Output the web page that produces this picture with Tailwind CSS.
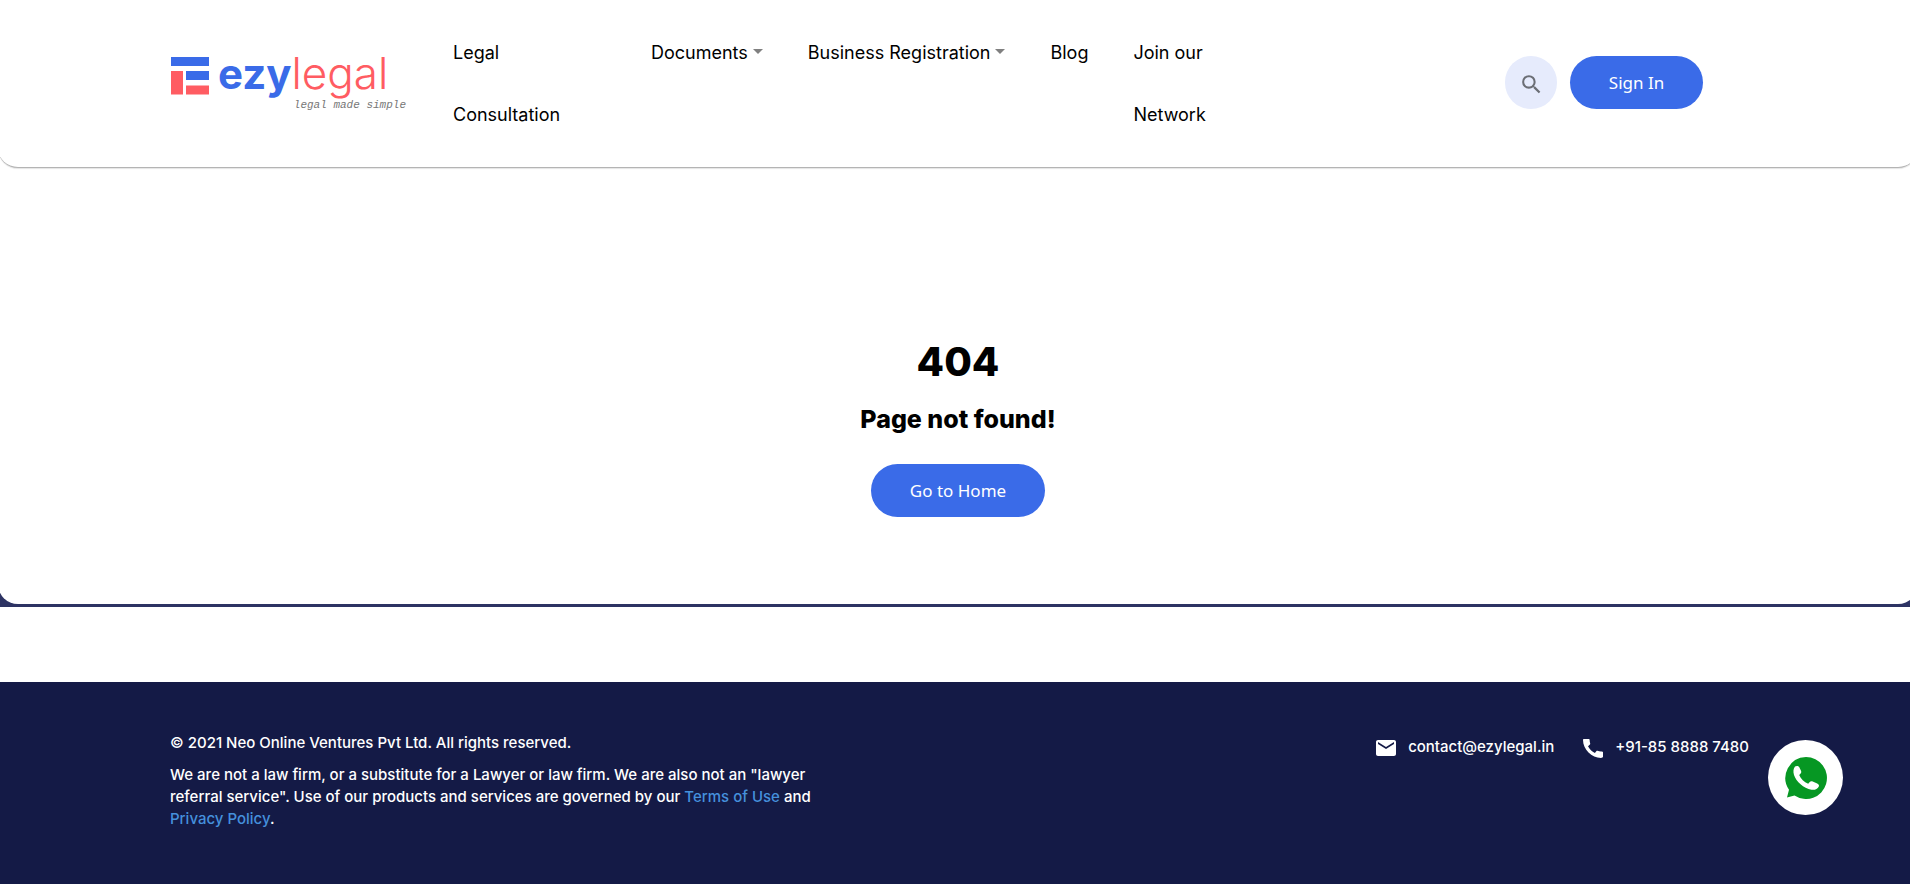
<!DOCTYPE html>
<html lang="en">
<head>
<meta charset="utf-8">
<meta name="viewport" content="width=device-width, initial-scale=1">
<title>ezylegal</title>
<script src="https://cdn.jsdelivr.net/npm/@tailwindcss/browser@4"></script>
</head>
<body class="bg-white font-['Inter',sans-serif] text-black overflow-x-hidden">
<div class="overflow-hidden bg-[#2d3363] pb-[3px]">
  <div class="-ml-[2px] -mr-[8px] rounded-b-[20px] bg-white">
    <header class="flex items-start rounded-b-[20px] border-b border-[#b4b4b4] bg-white pt-[22px] pb-[21px] pl-[173px] pr-[215px] shadow-[0_1px_1px_#e5e5e5]">
      <a href="#" class="mt-[27px] flex w-[235px] shrink-0 gap-2" aria-label="ezylegal home">
        <svg class="mt-[7px] h-[39px] w-[39px] shrink-0" viewBox="0 0 39 39" aria-hidden="true">
          <path fill="#3a6be8" d="M0 1h38v9H0zM15 15h23v9H15z"/>
          <path fill="#ff5c62" d="M0 15h12v23.500H0zM15 29.500h23v9H15z"/>
        </svg>
        <span class="flex grow flex-col">
          <span class="flex h-12 items-baseline whitespace-nowrap leading-[48px]"><span class="text-[42px] font-bold text-[#3a6be8]">ezy</span><span class="text-[44px] font-light text-[#ff5c62]">legal</span></span>
          <span class="self-end whitespace-nowrap font-['Liberation_Mono',monospace] text-[11px] leading-4 text-[#777] italic">legal made simple</span>
        </span>
      </a>
      <nav class="ml-[47px] flex gap-[45px] text-[18px] leading-[62px] whitespace-nowrap">
        <a href="#" class="w-[153px]">Legal<br>Consultation</a>
        <a href="#" class="flex h-[62px] items-center gap-[5px]">Documents
          <svg class="mb-1 h-[5px] w-[10px]" viewBox="0 0 10 5" fill="#808080" aria-hidden="true"><path d="M0 0h10L5 5z"/></svg></a>
        <a href="#" class="flex h-[62px] items-center gap-[5px]">Business Registration
          <svg class="mb-1 h-[5px] w-[10px]" viewBox="0 0 10 5" fill="#808080" aria-hidden="true"><path d="M0 0h10L5 5z"/></svg></a>
        <a href="#">Blog</a>
        <a href="#">Join our<br>Network</a>
      </nav>
      <div class="mt-[34px] ml-auto flex gap-[13px]">
        <button type="button" aria-label="Search" class="flex h-[53px] w-[52px] items-center justify-center rounded-full bg-[#e6ebfc]">
          <svg class="mt-1 h-[25px] w-[25px]" viewBox="0 0 24 24" fill="#6b6e75" aria-hidden="true"><path d="M15.500 14h-.79l-.28-.27A6.471 6.471 0 0 0 16 9.500 6.500 6.500 0 1 0 9.500 16c1.610 0 3.090-.59 4.230-1.570l.27.28v.79l5 4.990L20.490 19l-4.990-5zm-6 0C7.010 14 5 11.990 5 9.500S7.010 5 9.500 5 14 7.010 14 9.500 11.990 14 9.500 14z"/></svg>
        </button>
        <button type="button" class="h-[53px] w-[133px] rounded-full bg-[#3a6be8] pt-px font-['Noto_Sans',sans-serif] text-[17px] text-white">Sign In</button>
      </div>
    </header>
    <main class="flex flex-col items-center pt-[170px] pb-[87px]">
      <h1 class="text-[40px] leading-[48px] font-extrabold">404</h1>
      <h2 class="mt-[17px] text-[25px] leading-8 font-extrabold">Page not found!</h2>
      <button type="button" class="mt-[29px] h-[53px] w-[174px] rounded-full bg-[#3a6be8] font-['Noto_Sans',sans-serif] text-[17px] text-white">Go to Home</button>
    </main>
  </div>
</div>
<footer class="mt-[75px] flex min-h-[202px] justify-between bg-[#141a46] pt-[50px] pr-[161px] pb-[54px] pl-[170px] text-[15px] leading-[22px] font-medium text-white">
  <div class="w-[650px]">
    <p>© 2021 Neo Online Ventures Pvt Ltd. All rights reserved.</p>
    <p class="mt-[10px]">We are not a law firm, or a substitute for a Lawyer or law firm. We are also not an "lawyer referral service". Use of our products and services are governed by our <a href="#" class="text-[#4590dc]">Terms of Use</a> and <a href="#" class="text-[#4590dc]">Privacy Policy</a>.</p>
  </div>
  <address class="mt-[3px] flex h-6 items-center gap-[27px] not-italic">
    <a href="mailto:contact@ezylegal.in" class="flex items-center gap-[10px]">
      <svg class="mt-[2px] h-6 w-6" viewBox="0 0 24 24" fill="#fff" aria-hidden="true"><path d="M20 4H4c-1.100 0-1.990.9-1.990 2L2 18c0 1.100.9 2 2 2h16c1.100 0 2-.9 2-2V6c0-1.100-.9-2-2-2zm0 4l-8 5-8-5V6l8 5 8-5v2z"/></svg>contact@ezylegal.in</a>
    <a href="tel:+918588887480" class="flex items-center gap-[10px]">
      <svg class="mt-[2px] h-6 w-6" viewBox="0 0 24 24" fill="#fff" aria-hidden="true"><path d="M20.010 15.380c-1.230 0-2.420-.2-3.530-.56-.35-.12-.74-.03-1.010.24l-1.570 1.970c-2.830-1.350-5.480-3.900-6.890-6.830l1.950-1.660c.27-.28.35-.67.24-1.020-.37-1.110-.56-2.300-.56-3.530 0-.54-.45-.99-.99-.99H3C2.450 3 2 3.240 2 3.990 2 13.280 10.730 22 20.010 22c.71 0 1.990-.63 1.990-1.180v-4.450c0-.54-.45-.99-1.990-.99z"/></svg>+91-85 8888 7480</a>
  </address>
</footer>
<a href="#" aria-label="Chat on WhatsApp" class="fixed right-[67px] bottom-[69px] flex h-[75px] w-[75px] items-center justify-center rounded-full bg-white">
  <svg class="h-[42px] w-[42px]" viewBox="0 0 42 42" aria-hidden="true">
    <path fill="#069723" d="M21 0a21 21 0 1 1-11.500 38.600L2 40.500l2-7.800A21 21 0 0 1 21 0z"/>
    <path fill="#fff" d="M10 9.500c1.500-1 3.500-.8 4.300.8l1.700 3.400c.6 1.300.2 2.200-.8 3.200l-1 1c1.600 3.800 4.900 7 9 8.800l1.300-1.400c.9-1 1.900-1.300 3.200-.7l4.500 2c1.700.8 2.200 1.900 1.500 3.200-1.300 2.500-4.200 3.500-7.200 2.900C18.500 31.200 11.300 24.700 9 18c-1-3.200-.7-6.500 1-8.500z"/>
  </svg>
</a>
</body>
</html>
